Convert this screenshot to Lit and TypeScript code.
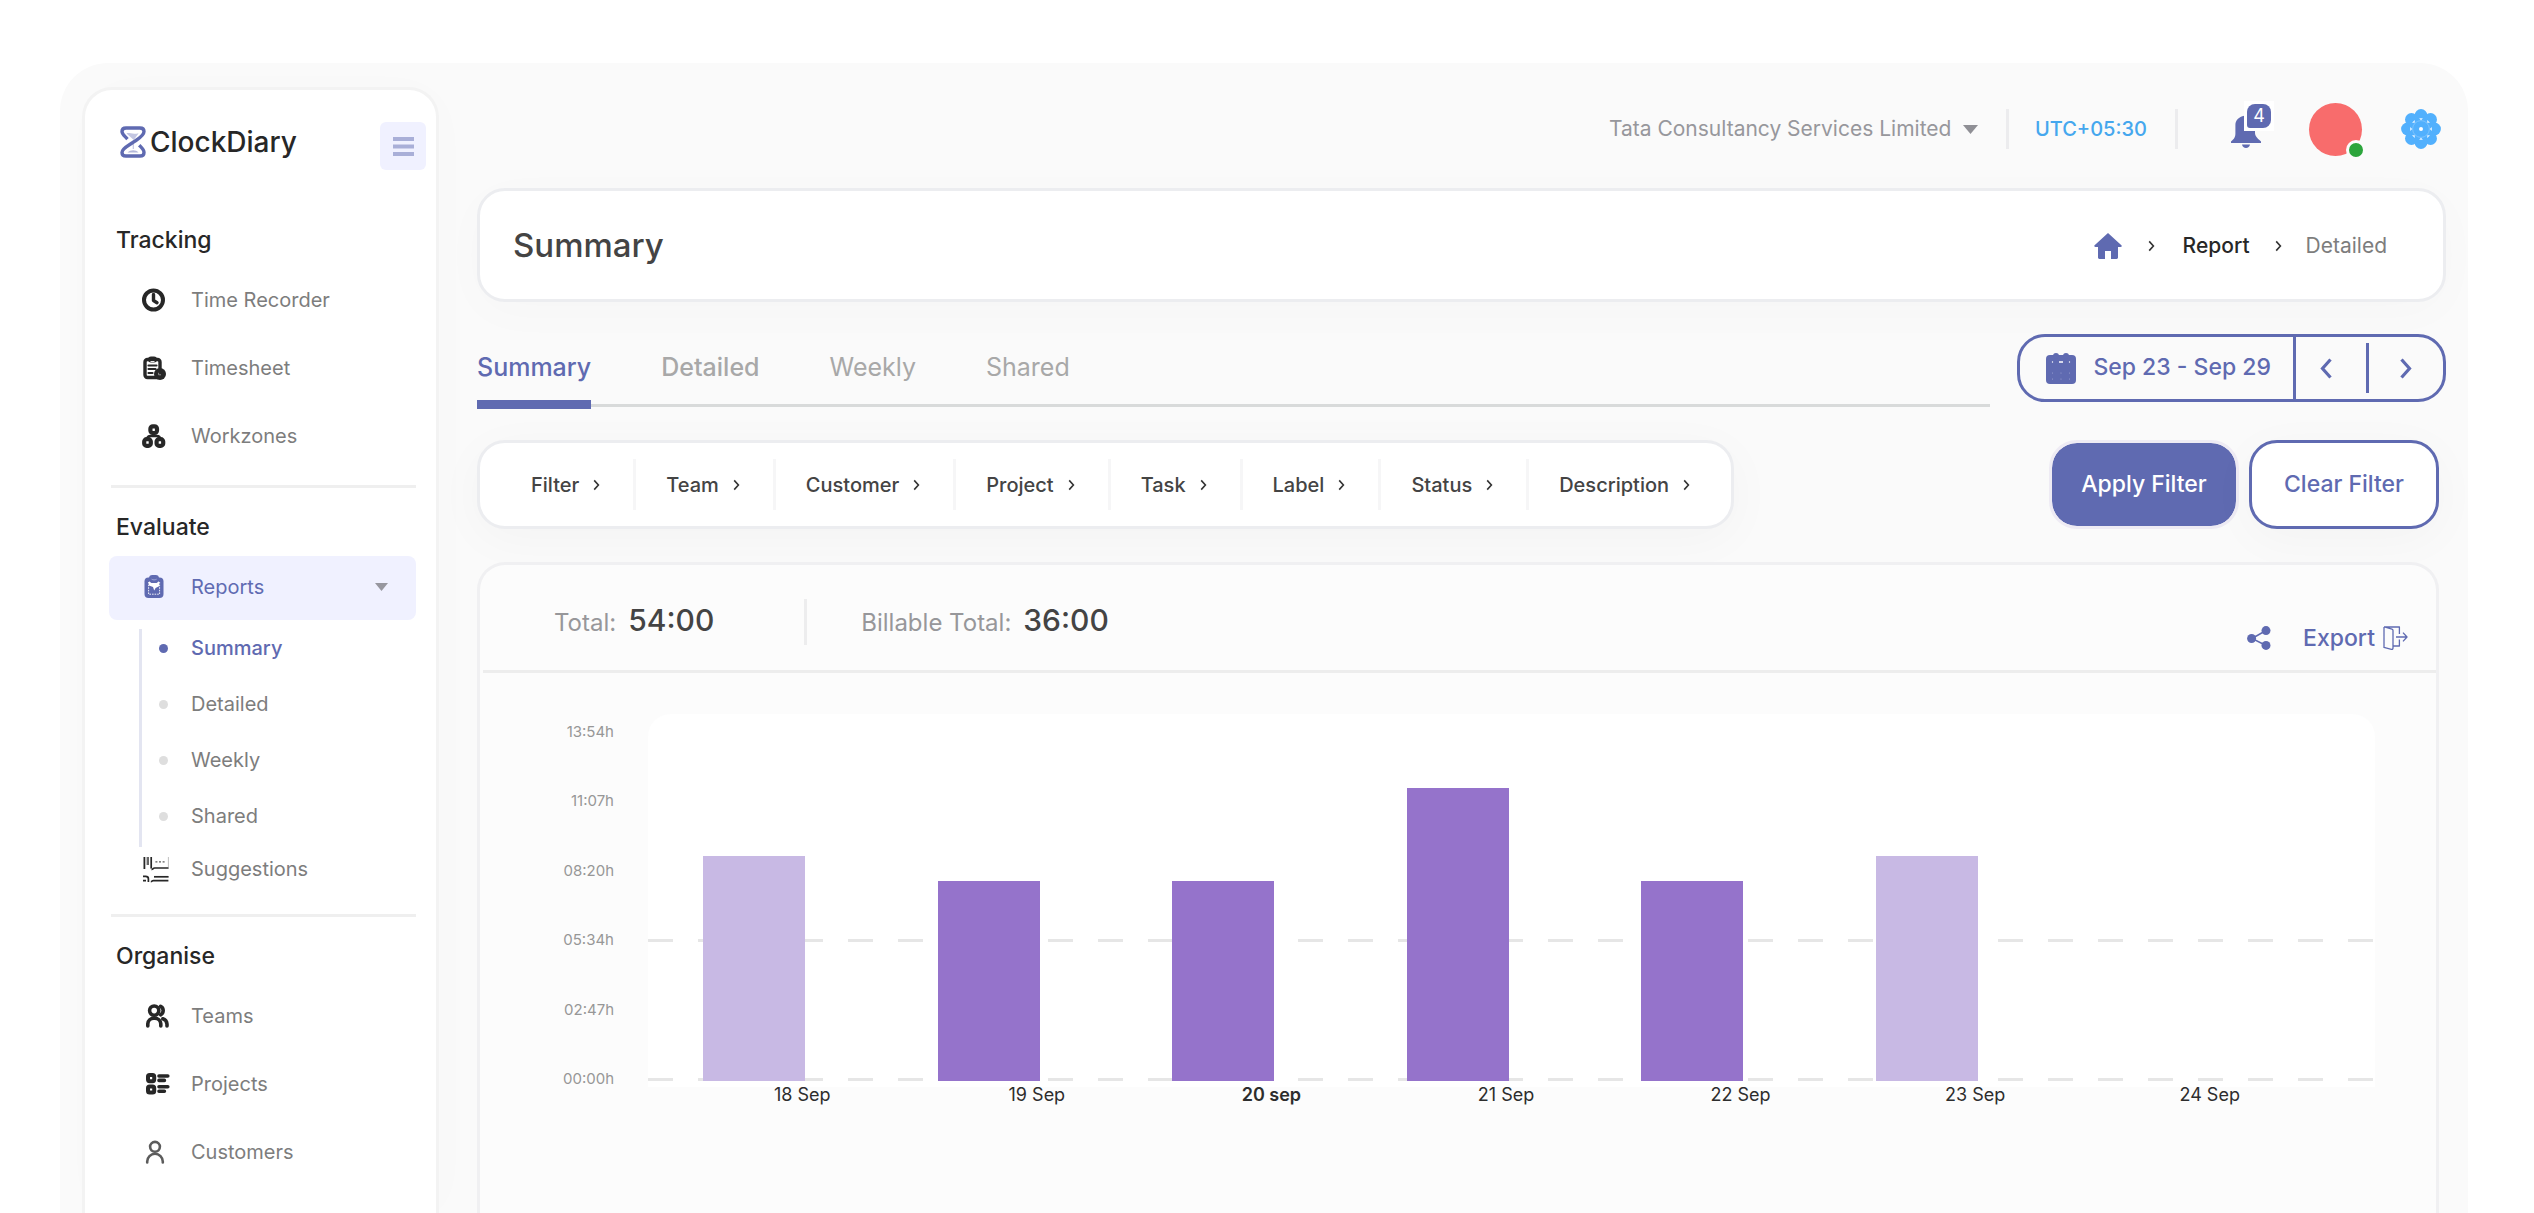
import { LitElement, html, svg, css, type TemplateResult } from "lit";
import { customElement, state } from "lit/decorators.js";
import { classMap } from "lit/directives/class-map.js";

interface NavItem {
  label: string;
  icon: TemplateResult;
}

const icons = {
  clock: svg`<circle cx="11.5" cy="13" r="9.5" fill="none" stroke="currentColor" stroke-width="4"/>
    <path d="M11.5 7.5v6l3.5 2.2" fill="none" stroke="currentColor" stroke-width="3.4" stroke-linecap="round" stroke-linejoin="round"/>`,
  timesheet: svg`<rect x="3" y="4.5" width="15" height="18" rx="2.5" fill="none" stroke="currentColor" stroke-width="3.4"/>
    <rect x="6" y="1.6" width="9" height="6" rx="3" fill="currentColor"/>
    <path d="M8.5 6.6h4" stroke="#fff" stroke-width="1"/>
    <path d="M6.5 10.5h8M6.5 14h7M6.5 18h4" stroke="currentColor" stroke-width="2.2" stroke-linecap="round"/>
    <circle cx="18" cy="19" r="6" fill="currentColor"/>
    <path d="M16.6 17.8v2h2.4" fill="none" stroke="#aaa" stroke-width=".8"/>`,
  workzones: svg`<g fill="none" stroke="currentColor" stroke-width="4.2">
      <rect x="8.4" y="3.4" width="6.6" height="6.6" rx="2.4"/>
      <rect x="2.2" y="16.2" width="6.6" height="6.6" rx="2.4"/>
      <rect x="14.6" y="16.2" width="6.6" height="6.6" rx="2.4"/></g>
    <path d="M11.7 11v3M5.6 15.4c0-2 1.4-2.4 3-2.4h6.2c1.6 0 3 .6 3 2.4" fill="none" stroke="currentColor" stroke-width="2.6"/>`,
  reports: svg`<rect x="2.5" y="3.4" width="19" height="20.6" rx="4" fill="currentColor"/>
    <rect x="7" y="1" width="10" height="7" rx="3.4" fill="currentColor"/>
    <path d="M9.6 5.2c1.6.9 3.4.9 5 0" fill="none" stroke="#aeb3df" stroke-width=".8"/>
    <path d="M7 7.2 9.4 9h5.2L17 7.2v5L13.6 14l-1.4 2.6L11 13l-4-1.6z" fill="#fff"/>
    <path d="M6.6 8v12.2h11V8" fill="none" stroke="#fff" stroke-width=".9" stroke-dasharray="1.6 1"/>`,
  suggestions: svg`<g fill="none" stroke="currentColor">
      <path d="M2.4 1v12" stroke-width="1.8"/><path d="M5.8 1v8" stroke-width="2.4" opacity=".7"/>
      <path d="M9.2 1v11.6" stroke-width="1.7"/>
      <path d="M9.6 13.4c1 .4 1.4-1.4 3-1.4h14" stroke-width="1.7"/>
      <path d="M13.4 5.8h2M17 5.8h2M20.6 5.8h2" stroke-width="1.3" opacity=".75"/>
      <path d="M26.4 1v10" stroke-width=".6" opacity=".5"/>
      <path d="M1 20.4h2.6c2 0 2.8 1 2.8 2.4v3.2M1 24.6h3" stroke-width="1.7"/>
      <path d="M8.8 25.6c1.2 0 1.2-1 2.6-1h15" stroke-width="1.7"/>
      <path d="M12 20.8h14.6" stroke-width="1.7"/></g>`,
  teams: svg`<g fill="none" stroke="currentColor" stroke-width="3.6" stroke-linecap="round">
      <circle cx="12.2" cy="7.6" r="4.6"/><path d="M18.6 3.4a4.7 4.7 0 0 1 0 8.4"/>
      <path d="M5.8 23v-2.2a6 6 0 0 1 6-5.6h1a6 6 0 0 1 6 5.6V23M20.8 15.8c2.6.8 4 2.6 4.2 5.4V23"/></g>`,
  projects: svg`<g fill="none" stroke="currentColor" stroke-width="4" stroke-linecap="round">
      <rect x="6" y="4" width="6.2" height="6.2" rx="1.6"/><rect x="6" y="15.4" width="6.2" height="6.2" rx="1.6"/></g>
    <path d="M17 5h8.8M17 9.4h5.4M17 15.8h8.8M17 20.2h5.4" stroke="currentColor" stroke-width="3.6" stroke-linecap="round"/>`,
  customers: svg`<g fill="none" stroke="#5c5c5c" stroke-width="2.6" stroke-linecap="round">
      <circle cx="13" cy="7.8" r="4.9"/><path d="M5.2 23.4v-.8a7.8 7.8 0 0 1 15.6 0v.8"/></g>`,
};

const icon26 = (body: TemplateResult) =>
  html`<svg class="nav-icon" viewBox="0 0 26 26" aria-hidden="true">${body}</svg>`;

const chevron = html`<svg class="chevron" viewBox="0 0 7 12" aria-hidden="true">
  <path d="M1.2 1.4 5.4 6 1.2 10.6" fill="none" stroke="currentColor" stroke-width="1.6"/></svg>`;

const tracking: NavItem[] = [
  { label: "Time Recorder", icon: icons.clock },
  { label: "Timesheet", icon: icons.timesheet },
  { label: "Workzones", icon: icons.workzones },
];
const organise: NavItem[] = [
  { label: "Teams", icon: icons.teams },
  { label: "Projects", icon: icons.projects },
  { label: "Customers", icon: icons.customers },
];
const views = ["Summary", "Detailed", "Weekly", "Shared"];
const filters = ["Filter", "Team", "Customer", "Project", "Task", "Label", "Status", "Description"];
const ticks = ["13:54h", "11:07h", "08:20h", "05:34h", "02:47h", "00:00h"];
const days = [
  { label: "18 Sep", hours: 9, light: true },
  { label: "19 Sep", hours: 8 },
  { label: "20 sep", hours: 8, current: true },
  { label: "21 Sep", hours: 11.72 },
  { label: "22 Sep", hours: 8 },
  { label: "23 Sep", hours: 9, light: true },
  { label: "24 Sep", hours: 0 },
];
const PX_PER_HOUR = 25;

const base = css`
  * { box-sizing: border-box; }
  a { color: inherit; text-decoration: none; }
  button, select {
    margin: 0; padding: 0; border: 0; background: none;
    font: inherit; color: inherit; cursor: pointer;
  }
  h1, h2, p, ul, ol { margin: 0; padding: 0; font-weight: inherit; font-size: inherit; list-style: none; }
  svg { display: block; flex: none; }
`;

@customElement("side-bar")
export class SideBar extends LitElement {
  static styles = [base, css`
    :host {
      display: block; width: 357px; flex: none; margin: 24px 0 0 22px;
      background: #fff; border: 3px solid #f3f3f3; border-bottom: 0;
      border-radius: 30px 30px 0 0;
      box-shadow: 6px 0 50px rgba(0, 0, 0, .01);
    }
    .head { display: flex; justify-content: space-between; align-items: flex-start; padding: 32px 10px 0 35px; }
    .brand { display: flex; align-items: center; gap: 4px; font-size: 28px; font-weight: 500; line-height: 40px; color: #272727; }
    .brand-mark { width: 26px; height: 32px; }
    .menu { width: 46px; height: 48px; border-radius: 6px; background: #f0f1ff; display: grid; place-items: center; }
    .menu svg { width: 21px; height: 19px; }
    nav { padding: 54px 20px 20px 24px; }
    h2 { padding-left: 7px; font-size: 23px; line-height: 32px; font-weight: 500; color: #272727; }
    .group { padding-top: 10px; }
    .item { display: flex; align-items: center; gap: 23px; height: 68px; padding-left: 33px; font-size: 20px; color: #7d7d7d; }
    .nav-icon { width: 26px; height: 26px; color: #272727; overflow: visible; }
    .rule { height: 3px; margin: 15px 0 23px 2px; background: #efefef; }
    .rule.low { margin-top: 23px; }
    .open { height: 64px; width: 100%; margin-top: 13px; padding-right: 28px; padding-bottom: 3px; border-radius: 8px; background: #f0f1ff; color: #606bb2; text-align: left; }
    .open .nav-icon { color: #5f6ab1; }
    .open span { flex: 1; }
    .caret { width: 13px; height: 8px; }
    .tree { display: flex; flex-direction: column; gap: 18px; margin: 9px 0 0 30px; padding: 0 0 12px 17px; border-left: 3px solid #e3e5f1; }
    .leaf { display: flex; align-items: center; gap: 23px; height: 38px; font-size: 20px; color: #7d7d7d; }
    .leaf::before { content: ""; width: 9px; height: 9px; border-radius: 50%; background: #dedede; }
    .leaf.on { color: #5f6ab1; font-weight: 500; }
    .leaf.on::before { background: #5f6ab1; }
    .item.short { height: 44px; }
  `];

  private item(i: NavItem) {
    return html`<li><a class="item" href="#">${icon26(i.icon)}<span>${i.label}</span></a></li>`;
  }

  render() {
    return html`
      <div class="head">
        <a class="brand" href="#">
          <svg class="brand-mark" viewBox="0 0 26 32" aria-hidden="true">
            <path d="M6.5 7.5C9 6 12 9 18.6 7.2L13.8 14z" fill="#c3c6e2"/>
            <path d="M13.3 14v9" stroke="#c3c6e2" stroke-width="1.2"/>
            <path d="M7.5 26.6c3-3 8.5-3 11 0z" fill="#b4b8da"/>
            <path d="M6.3 11.9C4.5 10 2 8 2 5.6 2 3 3.8 2 6 2h14c2.4 0 4 1.2 4 3.6 0 4.6-6.5 7.6-11 10.8C8.6 19.5 2 22.5 2 26.4 2 29 3.8 30 6 30h14c2.4 0 4-1 4-3.6 0-2.2-1.6-4-3.6-6" fill="none" stroke="#5f6ab1" stroke-width="3.4" stroke-linecap="square"/>
          </svg>
          <span>ClockDiary</span>
        </a>
        <button class="menu" aria-label="Toggle menu">
          <svg viewBox="0 0 21 19"><path d="M0 2h21M0 9.5h21M0 17h21" stroke="#a9afd8" stroke-width="4"/></svg>
        </button>
      </div>
      <nav>
        <h2>Tracking</h2>
        <ul class="group">${tracking.map((i) => this.item(i))}</ul>
        <div class="rule"></div>
        <h2>Evaluate</h2>
        <button class="item open" aria-expanded="true">
          ${icon26(icons.reports)}<span>Reports</span>
          <svg class="caret" viewBox="0 0 13 8"><path d="M0 0h13L6.5 8z" fill="#97979f"/></svg>
        </button>
        <ul class="tree">
          ${views.map((v, n) => html`<li><a class=${classMap({ leaf: true, on: n === 0 })} href="#">${v}</a></li>`)}
        </ul>
        <a class="item short" href="#">${icon26(icons.suggestions)}<span>Suggestions</span></a>
        <div class="rule low"></div>
        <h2>Organise</h2>
        <ul class="group">${organise.map((i) => this.item(i))}</ul>
      </nav>`;
  }
}

@customElement("top-bar")
export class TopBar extends LitElement {
  static styles = [base, css`
    :host { display: flex; align-items: center; justify-content: flex-end; height: 125px; padding: 7px 5px 0 0; }
    .company { display: grid; align-items: center; }
    .company > * { grid-area: 1 / 1; }
    select { appearance: none; padding-right: 26px; font-size: 21px; line-height: 32px; color: #97979c; }
    .caret { width: 15px; height: 9px; justify-self: end; pointer-events: none; }
    .sep { width: 3px; height: 40px; background: #ececee; }
    .zone { padding: 0 28px 0 26px; font-size: 20px; font-weight: 500; color: #45a7ee; }
    .company + .sep { margin-left: 28px; }
    .bell { position: relative; width: 44px; height: 40px; margin-left: 53px; }
    .bell svg { width: 30px; height: 34px; margin-top: 4px; }
    .badge { position: absolute; top: -8px; left: 13px; padding: 3px; background: #fff; }
    .badge span { display: block; width: 24px; height: 24px; border-radius: 8px 8px 8px 3px; background: #5f6ab1; color: #fff; font-size: 18px; line-height: 24px; text-align: center; }
    .avatar { position: relative; width: 53px; height: 53px; margin-left: 34px; border-radius: 50%; background: #f86c6c; }
    .status { position: absolute; right: -4px; bottom: -4px; width: 20px; height: 20px; border-radius: 50%; border: 3px solid #fbfbfb; background: #2ca53c; }
    .gear { margin-left: 39px; }
    .gear svg { width: 40px; height: 40px; }
  `];

  render() {
    const petals = [0, 45, 90, 135, 180, 225, 270, 315];
    return html`
      <label class="company">
        <select aria-label="Company"><option>Tata Consultancy Services Limited</option></select>
        <svg class="caret" viewBox="0 0 15 9"><path d="M0 0h15L7.5 9z" fill="#8f8f95"/></svg>
      </label>
      <div class="sep"></div>
      <span class="zone">UTC+05:30</span>
      <div class="sep"></div>
      <button class="bell" aria-label="4 notifications">
        <svg viewBox="0 0 30 34">
          <path d="M15 0c1 0 1.8.6 1.8 1.8 4.6 1.2 7.2 5 7.2 9.2v7.6c0 3.2 1.6 5.4 6 8.8V29H0v-1.6c3.4-2.6 4.4-4.6 4.4-8.2V11c0-4.6 3.4-8 8.8-9.2C13.2.6 14 0 15 0z" fill="#5f6ab1"/>
          <path d="M11 30.6h8c-.4 2-2 3.4-4 3.4s-3.6-1.4-4-3.4z" fill="#5f6ab1"/>
        </svg>
        <span class="badge"><span>4</span></span>
      </button>
      <button class="avatar" aria-label="Account"><span class="status"></span></button>
      <button class="gear" aria-label="Settings">
        <svg viewBox="-20 -20 40 40">
          <circle r="15" fill="#52b0fd"/>
          ${petals.map((a) => svg`<g transform=${`rotate(${a})`}><circle cy="-13.5" r="6.4" fill="#52b0fd"/><path d="M-1.9-10.8h3.8L0-8.8z" fill="#e9f5ff"/></g>`)}
          <circle r="8.4" fill="none" stroke="#8ccafe" stroke-width=".7"/>
          <circle r="2" fill="#fff"/>
        </svg>
      </button>`;
  }
}

@customElement("hours-panel")
export class HoursPanel extends LitElement {
  static styles = [base, css`
    :host {
      display: block; flex: 1; margin: 33px 7px 0 0; background: #fcfcfc;
      border: 3px solid #f0f0f2; border-bottom: 0; border-radius: 28px 28px 0 0;
    }
    .summary { display: flex; align-items: center; height: 108px; margin-left: 3px; padding: 8px 28px 0 71px; border-bottom: 3px solid #ededed; }
    .total { display: flex; align-items: baseline; gap: 12px; font-size: 24px; line-height: 40px; color: #97979a; }
    .total strong { font-size: 30px; font-weight: 500; color: #444; }
    .sep { width: 3px; height: 46px; margin: 0 54px 0 90px; background: #ededee; }
    .actions { display: flex; align-items: center; gap: 32px; margin-left: auto; padding-top: 32px; color: #5f6ab1; }
    .share svg { width: 24px; height: 24px; }
    .export { display: flex; align-items: center; gap: 8px; font-size: 23px; line-height: 32px; font-weight: 500; }
    .export svg { width: 25px; height: 24px; }
    .chart { display: grid; grid-template-columns: 134px 1fr; grid-template-rows: 373px auto; column-gap: 34px; padding: 41px 61px 0 0; }
    .axis { display: flex; flex-direction: column; justify-content: space-between; height: 371px; margin-top: 6px; font-size: 15px; line-height: 24px; text-align: right; color: #979797; }
    .plot {
      display: grid; grid-template-columns: repeat(7, 1fr); align-items: end;
      height: 373px; padding: 0 30px 6px 55px; border-radius: 22px 22px 0 0; background-color: #fff;
      background-image:
        repeating-linear-gradient(90deg, #e6e6e6 0 25px, transparent 25px 50px),
        repeating-linear-gradient(90deg, #e6e6e6 0 25px, transparent 25px 50px);
      background-size: 100% 3px; background-position: 0 225px, 0 364px; background-repeat: no-repeat;
    }
    .bar { width: 102px; background: #9573cb; }
    .bar.light { background: #c8b9e4; }
    .days { grid-column: 2; display: grid; grid-template-columns: repeat(7, 1fr); padding: 0 30px 0 55px; font-size: 18px; line-height: 16px; color: #2d2d2d; }
    .days li { margin-right: 36px; text-align: center; }
    .days .current { font-weight: 600; }
  `];

  render() {
    return html`
      <div class="summary">
        <p class="total">Total: <strong>54:00</strong></p>
        <div class="sep"></div>
        <p class="total">Billable Total: <strong>36:00</strong></p>
        <div class="actions">
          <button class="share" aria-label="Share">
            <svg viewBox="0 0 24 24"><path d="M19 4.5 5 12.5l14 7" fill="none" stroke="currentColor" stroke-width="1.5"/>
              <g fill="currentColor"><circle cx="19" cy="4.6" r="4.5"/><circle cx="4.6" cy="12.5" r="4.5"/><circle cx="19" cy="19.4" r="4.5"/></g></svg>
          </button>
          <button class="export">Export
            <svg viewBox="0 0 25 24"><g fill="none" stroke="currentColor" stroke-width="1.3" stroke-linejoin="round">
              <path d="M1 1h15.4v7M16.4 13.6V20H10M1 1v20.4l7.4 1.9c1 .2 1.6-.3 1.6-1.2V4.6c0-.7-.4-1.2-1-1.4L1.4 1M13 11h10.6M20 6.6l4 4.4-4 4.4"/></g></svg>
          </button>
        </div>
      </div>
      <div class="chart">
        <ol class="axis">${ticks.map((t) => html`<li>${t}</li>`)}</ol>
        <div class="plot">
          ${days.map((d) => html`<div class=${classMap({ bar: true, light: !!d.light })} style=${`height:${Math.round(d.hours * PX_PER_HOUR)}px`}></div>`)}
        </div>
        <ol class="days">${days.map((d) => html`<li class=${classMap({ current: !!d.current })}>${d.label}</li>`)}</ol>
      </div>`;
  }
}

@customElement("app-root")
export class AppRoot extends LitElement {
  @state() private view = "Summary";

  static styles = [base, css`
    :host { display: block; background: #fff; font-family: Inter, "Liberation Sans", sans-serif; line-height: 1.2; }
    .page { min-height: 100vh; display: flex; padding: 63px 66px 0 60px; }
    .shell { flex: 1; min-width: 0; display: flex; background: #fafafa; border-radius: 48px 48px 0 0; }
    main { flex: 1; min-width: 0; display: flex; flex-direction: column; padding: 0 22px 0 38px; }
    .title { display: flex; align-items: center; justify-content: space-between; height: 114px; padding: 2px 56px 0 33px; background: #fff; border: 3px solid #ecedf0; border-radius: 28px; box-shadow: 0 10px 50px rgba(0, 0, 0, .02); }
    h1 { font-size: 33px; font-weight: 500; color: #444; }
    .crumbs { display: flex; align-items: center; font-size: 21px; color: #7d7d7d; }
    .home { width: 28px; height: 26px; margin-right: 26px; }
    .chevron { width: 7px; height: 12px; color: #333; }
    .crumbs a { margin: 0 25px 0 28px; color: #272727; font-weight: 500; }
    .crumbs a.first { margin: 0; }
    .crumbs span { margin-left: 24px; }
    .range { display: flex; align-items: flex-start; gap: 27px; margin-top: 32px; }
    .tabs { flex: 1; display: flex; gap: 70px; background: linear-gradient(#d8dada, #d8dada) 0 70px / 100% 3px no-repeat; }
    .tab { height: 75px; border-bottom: 9px solid transparent; font-size: 25px; color: #a8a8a8; }
    .tab.strong { font-weight: 500; }
    .tab.on { border-color: #5f6ab1; color: #5f6ab1; font-weight: 500; }
    .picker { display: flex; height: 68px; border: 3px solid #5f6ab1; border-radius: 28px; color: #5f6ab1; overflow: hidden; }
    .dates { display: flex; align-items: center; gap: 17px; padding: 0 22px 0 26px; border-right: 3px solid #5f6ab1; font-size: 23px; font-weight: 500; }
    .dates svg { width: 30px; height: 31px; }
    .step { width: 74px; display: grid; place-items: center; }
    .step.back { width: 70px; padding-right: 10px; }
    .step svg { width: 12px; height: 21px; }
    .bar { width: 3px; margin: 6px 0; background: #5f6ab1; }
    .tools { display: flex; justify-content: space-between; margin: 31px 7px 0 0; }
    .filters { display: flex; align-items: center; height: 89px; padding: 0 8px 0 21px; background: #fff; border: 3px solid #ecedf0; border-radius: 28px; box-shadow: 0 10px 50px rgba(0, 0, 0, .03); }
    .filter { display: flex; align-items: center; gap: 14px; height: 51px; padding: 0 33px 0 30px; border-right: 3px solid #f6f6f7; font-size: 20px; font-weight: 500; color: #444; }
    .filter:last-child { border-right: 0; }
    .buttons { display: flex; gap: 10px; }
    .apply, .clear { height: 89px; width: 190px; border-radius: 28px; font-size: 23px; font-weight: 500; }
    .apply { border: 3px solid #eeebf4; background: #5f6ab1; background-clip: padding-box; color: #fff; }
    .clear { border: 3px solid #5f6ab1; background: #fff; color: #5f6ab1; box-shadow: 0 10px 50px rgba(0, 0, 0, .03); }
  `];

  render() {
    return html`
      <div class="page"><div class="shell">
        <side-bar></side-bar>
        <main>
          <top-bar></top-bar>
          <header class="title">
            <h1>Summary</h1>
            <nav class="crumbs" aria-label="Breadcrumb">
              <a class="first" href="#" aria-label="Home"><svg class="home" viewBox="0 0 28 26"><path d="M14 0l13.4 12.2c.8.8.4 1.8-.8 1.8H24v10.6c0 .8-.6 1.4-1.4 1.4H17v-8h-6v8H5.4C4.6 26 4 25.4 4 24.6V14H1.4C.2 14-.2 13 .6 12.2z" fill="#5f6ab1"/></svg></a>
              ${chevron}<a href="#">Report</a>${chevron}<span>Detailed</span>
            </nav>
          </header>
          <div class="range">
            <div class="tabs" role="tablist">
              ${views.map((v, n) => html`<button role="tab" aria-selected=${v === this.view}
                class=${classMap({ tab: true, on: v === this.view, strong: n === 1 })}
                @click=${() => { this.view = v; }}>${v}</button>`)}
            </div>
            <div class="picker">
              <button class="dates">
                <svg viewBox="0 0 30 31"><rect y="2" width="30" height="29" rx="4" fill="currentColor"/>
                  <circle cx="10" cy="3" r="3" fill="currentColor"/><circle cx="20" cy="3" r="3" fill="currentColor"/>
                  <path d="M13 9h4" stroke="#fff" stroke-width="1.4"/>
                  <g fill="#fff"><circle cx="6.5" cy="9" r=".7"/><circle cx="23.5" cy="9" r=".7"/></g>
                  <g fill="#9ca3d3"><circle cx="6.5" cy="20" r=".6"/><circle cx="15" cy="20" r=".6"/><circle cx="23.5" cy="20" r=".6"/><circle cx="6.5" cy="26" r=".6"/><circle cx="15" cy="26" r=".6"/><circle cx="23.5" cy="26" r=".6"/></g></svg>
                Sep 23 - Sep 29
              </button>
              <button class="step back" aria-label="Previous week"><svg viewBox="0 0 12 21"><path d="M10.5 1.5 2.5 10.5l8 9" fill="none" stroke="currentColor" stroke-width="3.2"/></svg></button>
              <div class="bar"></div>
              <button class="step" aria-label="Next week"><svg viewBox="0 0 12 21"><path d="M1.5 1.5l8 9-8 9" fill="none" stroke="currentColor" stroke-width="3.2"/></svg></button>
            </div>
          </div>
          <div class="tools">
            <div class="filters">${filters.map((f) => html`<button class="filter">${f}${chevron}</button>`)}</div>
            <div class="buttons"><button class="apply">Apply Filter</button><button class="clear">Clear Filter</button></div>
          </div>
          <hours-panel></hours-panel>
        </main>
      </div></div>`;
  }
}
